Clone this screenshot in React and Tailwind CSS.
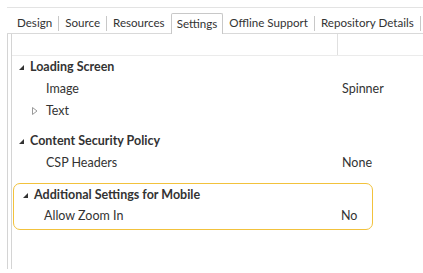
import React from "react";

const tabs = ["Design", "Source", "Resources", "Settings", "Offline Support", "Repository Details"];

const Expanded = () => (
  <svg width="7" height="7" viewBox="0 0 7 7" className="shrink-0">
    <path d="M6 1 L6 6 L1 6 Z" fill="#333" />
  </svg>
);

const Collapsed = () => (
  <svg width="6" height="8" viewBox="0 0 6 8" className="shrink-0">
    <path d="M0.5 0.5 L5 4 L0.5 7.5 Z" fill="none" stroke="#999" strokeWidth="1" />
  </svg>
);

const Group = ({ title }) => (
  <div className="flex items-center h-[22px] pl-[6px]">
    <Expanded />
    <span className="ml-[5px] font-bold">{title}</span>
  </div>
);

const Row = ({ label, value, arrow }) => (
  <div className="flex items-center h-[22px]">
    <div className="w-[330px] flex items-center pl-[20px]">
      {arrow ? <Collapsed /> : <span className="w-[6px]" />}
      <span className="ml-[8px]">{label}</span>
    </div>
    <span>{value}</span>
  </div>
);

export default function App() {
  return (
    <div
      className="w-[423px] h-[273px] bg-white overflow-hidden text-[12.5px] text-[#333] whitespace-nowrap"
      style={{ fontFamily: '"Lato", "Open Sans", sans-serif' }}
    >
      <div className="mt-[7px] ml-[7px] border-t border-[#e3e3e3]">
        <div className="flex items-end h-[26px] pl-[4px] border-b border-[#d9d9d9] text-[11.6px]">
          {tabs.map((t, i) =>
            t === "Settings" ? (
              <div key={t} className="h-[21px] px-[5px] flex items-center border border-b-0 border-[#c8c8c8] bg-white mb-[-1px] rounded-t-[2px]">
                {t}
              </div>
            ) : (
              <div key={t} className="h-[20px] flex items-center">
                <span className="px-[6px]">{t}</span>
                {i !== 2 && <span className="w-px h-[15px] bg-[#c8c8c8]" />}
              </div>
            )
          )}
        </div>
        <div className="flex h-[235px] border-l border-[#d4d4d4]">
          <div className="w-[3px]" />
          <div className="flex-1 border-l border-[#d4d4d4]">
            <div className="flex h-[22px] border-b border-[#ebebeb]">
              <div className="w-[326px] border-r border-[#e0e0e0]" />
            </div>
            <Group title="Loading Screen" />
            <Row label="Image" value="Spinner" />
            <Row label="Text" arrow />
            <div className="h-[8px]" />
            <Group title="Content Security Policy" />
            <Row label="CSP Headers" value="None" />
            <div className="h-[9px]" />
            <div className="ml-[1px] w-[360px] border-[1.5px] border-[#f2c23c] rounded-[7px] pb-[3px]">
              <div className="pl-[2px]">
                <Group title="Additional Settings for Mobile" />
              </div>
              <div className="flex items-center h-[20px]">
                <div className="w-[327px] pl-[30px]">Allow Zoom In</div>
                <span>No</span>
              </div>
            </div>
          </div>
        </div>
      </div>
    </div>
  );
}
